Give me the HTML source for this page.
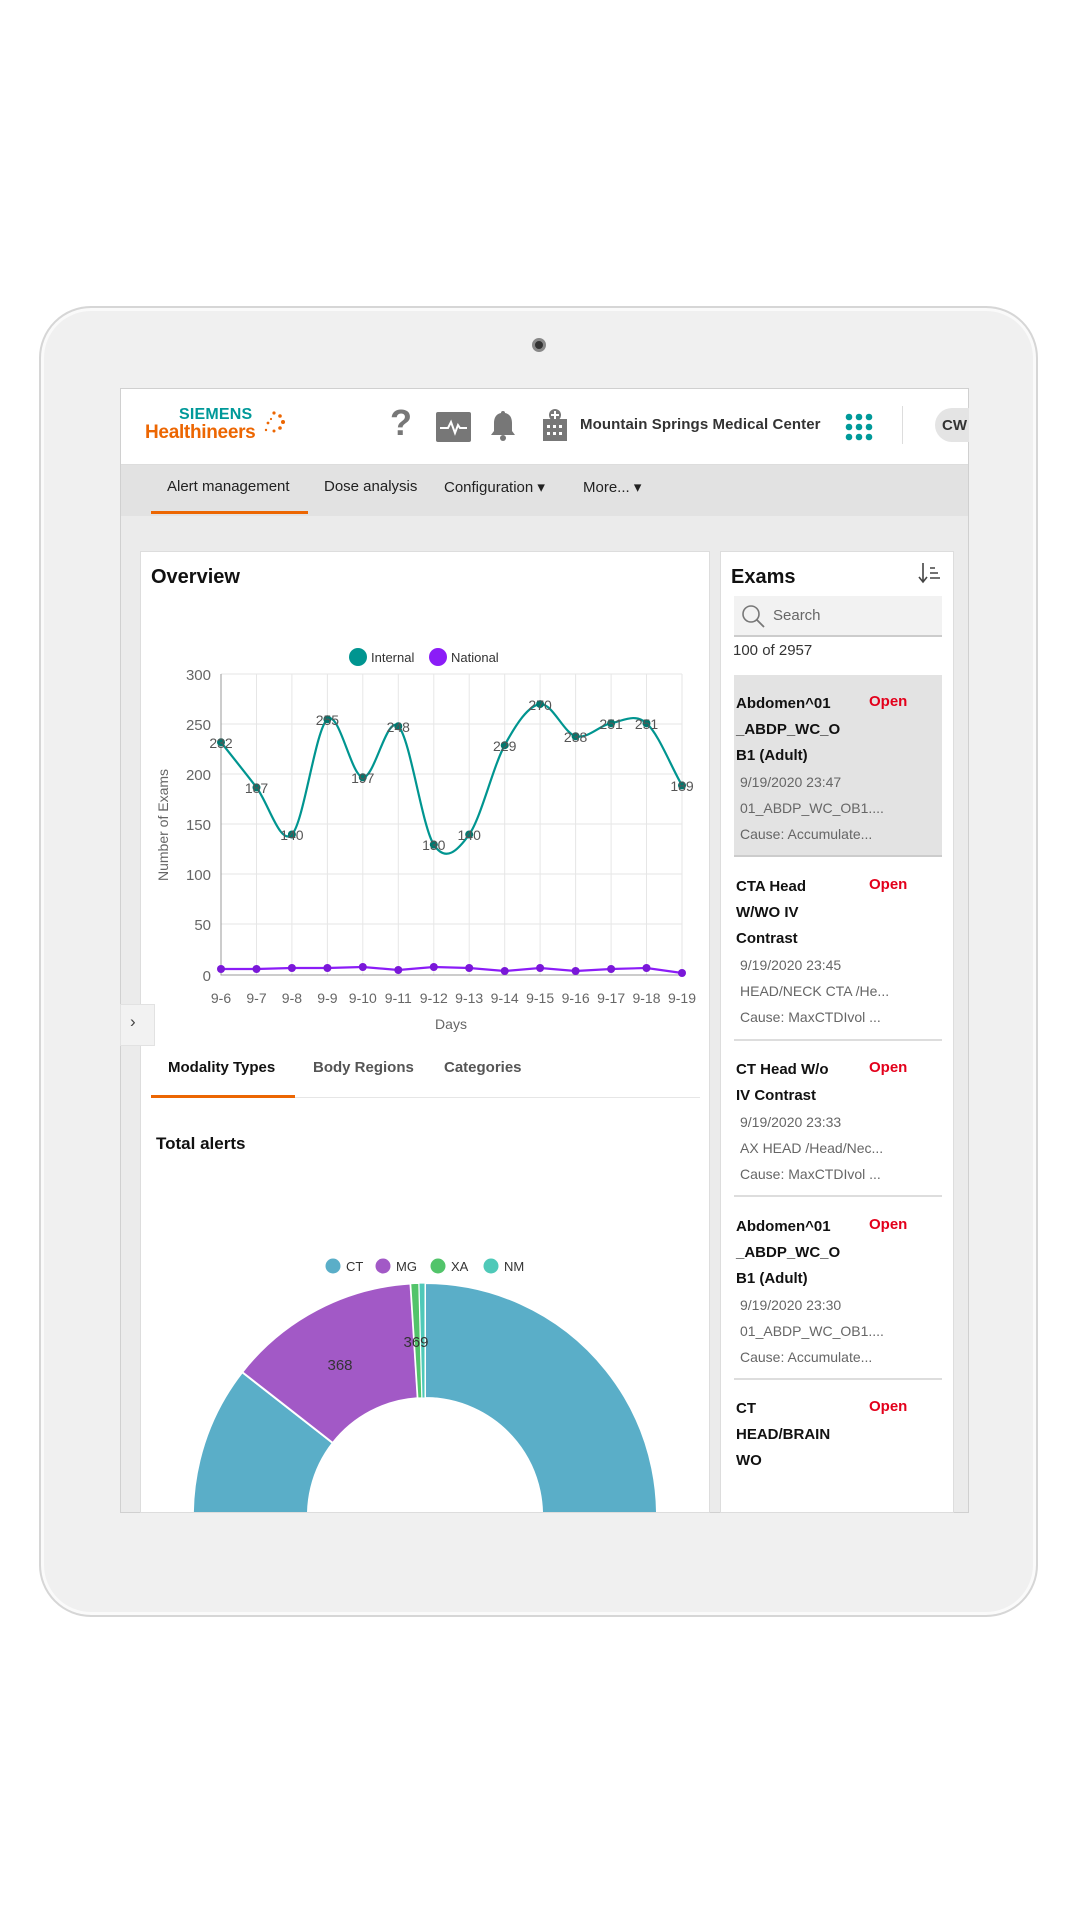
<!DOCTYPE html>
<html><head><meta charset="utf-8"><style>
*{margin:0;padding:0;box-sizing:border-box}
body{width:1080px;height:1920px;background:#fff;position:relative;overflow:hidden;font-family:"Liberation Sans",sans-serif}
.a{position:absolute}
.tab{left:39px;top:306px;width:999px;height:1311px;border-radius:52px;background:#f0f0f0;border:2px solid #d6d6d6;box-shadow:inset 0 0 0 3px #fafafa}
.scr{left:120px;top:388px;width:849px;height:1125px;background:#ebebeb;overflow:hidden;border:1px solid #d0d0d0}
.t{white-space:nowrap}
.ex{font-size:15px;font-weight:bold;color:#111}
.sub{font-size:14px;color:#666}
.op{font-size:15px;font-weight:bold;color:#e3001b}
</style></head><body>
<div class="a tab"></div>
<div class="a" style="left:532px;top:338px;width:14px;height:14px;border-radius:50%;background:#333;border:3px solid #888"></div>
<div class="a scr">
 <div class="a" style="left:0;top:0;width:849px;height:76px;background:#fff;border-bottom:1px solid #ddd"></div>
 <div class="a" style="left:0;top:76px;width:849px;height:51px;background:#e2e2e2"></div>
</div>
<!-- header -->
<div class="a t" style="left:179px;top:406px;font-size:16px;font-weight:bold;color:#009999;letter-spacing:0.2px">SIEMENS</div>
<div class="a t" style="left:145px;top:422px;font-size:19px;font-weight:bold;color:#ec6602;letter-spacing:-0.3px">Healthineers</div>
<svg class="a" style="left:262px;top:410px" width="24" height="30"><g fill="#ec6602"><circle cx="12" cy="3" r="1.6"/><circle cx="18" cy="6" r="1.8"/><circle cx="21" cy="12" r="2"/><circle cx="18" cy="18" r="1.8"/><circle cx="12" cy="21" r="1.5"/><circle cx="6" cy="13" r="1.4"/><circle cx="4" cy="20" r="1.2"/><circle cx="9" cy="9" r="1.1"/></g></svg>
<div class="a t" style="left:390px;top:402px;font-size:36px;font-weight:bold;color:#777">?</div>
<svg class="a" style="left:436px;top:412px" width="35" height="30"><rect width="35" height="30" rx="2" fill="#777"/><path d="M4 16h8l3-6 4 11 3-8 2 3h7" stroke="#fff" stroke-width="2" fill="none"/></svg>
<svg class="a" style="left:490px;top:409px" width="26" height="32"><path d="M13 2a2 2 0 0 1 2 2c5 1 7 5 7 10v8l3 4H1l3-4v-8c0-5 2-9 7-10a2 2 0 0 1 2-2z" fill="#777"/><circle cx="13" cy="29" r="3" fill="#777"/></svg>
<svg class="a" style="left:541px;top:407px" width="28" height="34"><rect x="2" y="12" width="24" height="22" fill="#777"/><circle cx="14" cy="8" r="6" fill="#777"/><path d="M14 4v8M10 8h8" stroke="#fff" stroke-width="2"/><g fill="#fff"><rect x="6" y="18" width="3" height="3"/><rect x="12" y="18" width="3" height="3"/><rect x="18" y="18" width="3" height="3"/><rect x="6" y="25" width="3" height="3"/><rect x="12" y="25" width="3" height="3"/><rect x="18" y="25" width="3" height="3"/></g></svg>
<div class="a t" style="left:580px;top:416px;font-size:15px;font-weight:bold;color:#333;letter-spacing:0.1px">Mountain Springs Medical Center</div>
<svg class="a" style="left:845px;top:413px" width="28" height="28"><g fill="#009999"><circle cx="4" cy="4" r="3.3"/><circle cx="14" cy="4" r="3.3"/><circle cx="24" cy="4" r="3.3"/><circle cx="4" cy="14" r="3.3"/><circle cx="14" cy="14" r="3.3"/><circle cx="24" cy="14" r="3.3"/><circle cx="4" cy="24" r="3.3"/><circle cx="14" cy="24" r="3.3"/><circle cx="24" cy="24" r="3.3"/></g></svg>
<div class="a" style="left:902px;top:406px;width:1px;height:38px;background:#ddd"></div>
<div class="a" style="left:935px;top:408px;width:34px;height:34px;border-radius:17px 0 0 17px;background:#e4e4e4"></div>
<div class="a t" style="left:942px;top:417px;font-size:15px;font-weight:bold;color:#333">CW</div>
<!-- nav -->
<div class="a t" style="left:167px;top:478px;font-size:15px;color:#222">Alert management</div>
<div class="a" style="left:151px;top:511px;width:157px;height:3px;background:#ec6602"></div>
<div class="a t" style="left:324px;top:478px;font-size:15px;color:#222">Dose analysis</div>
<div class="a t" style="left:444px;top:478px;font-size:15px;color:#222">Configuration ▾</div>
<div class="a t" style="left:583px;top:478px;font-size:15px;color:#222">More... ▾</div>
<!-- cards -->
<div class="a" style="left:140px;top:551px;width:570px;height:962px;background:#fff;border:1px solid #ddd;overflow:hidden"></div>
<div class="a" style="left:720px;top:551px;width:234px;height:962px;background:#fff;border:1px solid #ddd"></div>
<div class="a" style="left:120px;top:1004px;width:35px;height:42px;background:#f2f2f2;border:1px solid #e2e2e2"></div>
<div class="a t" style="left:130px;top:1012px;font-size:17px;color:#444">›</div>
<div class="a t" style="left:151px;top:566px;font-size:20px;font-weight:bold;color:#111">Overview</div>
<svg class="a" style="left:0;top:0" width="1080" height="1920">
<defs><clipPath id="c"><rect x="141" y="552" width="568" height="960"/></clipPath></defs>
<g font-family="Liberation Sans" font-size="13" fill="#333">
<circle cx="358" cy="657" r="9" fill="#009590"/><text x="371" y="662">Internal</text>
<circle cx="438" cy="657" r="9" fill="#8b1cf7"/><text x="451" y="662">National</text>
</g>
<g stroke="#e6e6e6" stroke-width="1">
<path d="M221 674H682M221 724H682M221 774H682M221 824H682M221 874H682M221 924H682"/>
<path d="M256.5 674V975M291.9 674V975M327.4 674V975M362.8 674V975M398.3 674V975M433.8 674V975M469.2 674V975M504.7 674V975M540.1 674V975M575.6 674V975M611.1 674V975M646.5 674V975M682 674V975"/>
</g>
<path d="M221 674V975H682" stroke="#999" fill="none"/>
<g font-family="Liberation Sans" font-size="15" fill="#666" text-anchor="end">
<text x="211" y="680">300</text><text x="211" y="730">250</text><text x="211" y="780">200</text><text x="211" y="830">150</text><text x="211" y="880">100</text><text x="211" y="930">50</text><text x="211" y="981">0</text>
</g>
<g font-family="Liberation Sans" font-size="14" fill="#666" text-anchor="middle">
<text x="221" y="1003">9-6</text><text x="256.5" y="1003">9-7</text><text x="291.9" y="1003">9-8</text><text x="327.4" y="1003">9-9</text><text x="362.8" y="1003">9-10</text><text x="398.3" y="1003">9-11</text><text x="433.8" y="1003">9-12</text><text x="469.2" y="1003">9-13</text><text x="504.7" y="1003">9-14</text><text x="540.1" y="1003">9-15</text><text x="575.6" y="1003">9-16</text><text x="611.1" y="1003">9-17</text><text x="646.5" y="1003">9-18</text><text x="682" y="1003">9-19</text>
<text x="451" y="1029">Days</text>
<text transform="translate(168 825) rotate(-90)">Number of Exams</text>
</g>
<path d="M221,742.2 C232.8,757.3 244.7,772.0 256.5,787.4 C268.3,802.8 280.1,845.9 291.9,834.5 C303.7,823.1 315.6,728.7 327.4,719.2 C339.2,709.7 351.0,776.1 362.8,777.3 C374.6,778.5 386.5,715.0 398.3,726.2 C410.1,737.4 422.0,826.5 433.8,844.6 C445.6,862.7 457.4,851.1 469.2,834.5 C481.0,817.9 492.9,766.9 504.7,745.2 C516.5,723.5 528.3,705.6 540.1,704.1 C551.9,702.6 563.8,733.0 575.6,736.2 C587.4,739.4 599.3,725.4 611.1,723.2 C622.9,721.0 634.7,712.8 646.5,723.2 C658.3,733.6 670.2,764.7 682,785.4" stroke="#009590" stroke-width="2.2" fill="none"/>
<g fill="#00786f"><circle cx="221" cy="742.2" r="4"/><circle cx="256.5" cy="787.4" r="4"/><circle cx="291.9" cy="834.5" r="4"/><circle cx="327.4" cy="719.2" r="4"/><circle cx="362.8" cy="777.3" r="4"/><circle cx="398.3" cy="726.2" r="4"/><circle cx="433.8" cy="844.6" r="4"/><circle cx="469.2" cy="834.5" r="4"/><circle cx="504.7" cy="745.2" r="4"/><circle cx="540.1" cy="704.1" r="4"/><circle cx="575.6" cy="736.2" r="4"/><circle cx="611.1" cy="723.2" r="4"/><circle cx="646.5" cy="723.2" r="4"/><circle cx="682" cy="785.4" r="4"/></g>
<polyline points="221,969 256.5,969 291.9,968 327.4,968 362.8,967 398.3,970 433.8,967 469.2,968 504.7,971 540.1,968 575.6,971 611.1,969 646.5,968 682,973" stroke="#8b1cf7" stroke-width="2.2" fill="none"/>
<g fill="#7a18d8"><circle cx="221" cy="969" r="4"/><circle cx="256.5" cy="969" r="4"/><circle cx="291.9" cy="968" r="4"/><circle cx="327.4" cy="968" r="4"/><circle cx="362.8" cy="967" r="4"/><circle cx="398.3" cy="970" r="4"/><circle cx="433.8" cy="967" r="4"/><circle cx="469.2" cy="968" r="4"/><circle cx="504.7" cy="971" r="4"/><circle cx="540.1" cy="968" r="4"/><circle cx="575.6" cy="971" r="4"/><circle cx="611.1" cy="969" r="4"/><circle cx="646.5" cy="968" r="4"/><circle cx="682" cy="973" r="4"/></g>
<g font-family="Liberation Sans" font-size="14" fill="#555" text-anchor="middle">
<text x="221" y="748">232</text><text x="256.5" y="793">187</text><text x="291.9" y="840">140</text><text x="327.4" y="725">255</text><text x="362.8" y="783">197</text><text x="398.3" y="732">248</text><text x="433.8" y="850">130</text><text x="469.2" y="840">140</text><text x="504.7" y="751">229</text><text x="540.1" y="710">270</text><text x="575.6" y="742">238</text><text x="611.1" y="729">251</text><text x="646.5" y="729">251</text><text x="682" y="791">189</text>
</g>
<g clip-path="url(#c)">
<path d="M425,1283 A232,232 0 1 1 242.2,1372.1 L332.8,1443 A117,117 0 1 0 425,1398 Z" fill="#5aaec8" stroke="#fff" stroke-width="2"/>
<path d="M242.2,1372.1 A232,232 0 0 1 410.5,1283.5 L417.7,1398.2 A117,117 0 0 0 332.8,1443 Z" fill="#a259c6" stroke="#fff" stroke-width="2"/>
<path d="M410.5,1283.5 A232,232 0 0 1 419,1283.1 L422,1398 A117,117 0 0 0 417.7,1398.2 Z" fill="#52c46a" stroke="#fff" stroke-width="1.5"/>
<path d="M419,1283.1 A232,232 0 0 1 425,1283 L425,1398 A117,117 0 0 0 422,1398 Z" fill="#4fc9b8" stroke="#fff" stroke-width="1"/>
</g>
<g font-family="Liberation Sans" font-size="15" fill="#333" text-anchor="middle"><text x="340" y="1370">368</text><text x="416" y="1347">369</text></g>
<g font-family="Liberation Sans" font-size="13" fill="#333">
<circle cx="333" cy="1266" r="7.5" fill="#5aaec8"/><text x="346" y="1271">CT</text>
<circle cx="383" cy="1266" r="7.5" fill="#a259c6"/><text x="396" y="1271">MG</text>
<circle cx="438" cy="1266" r="7.5" fill="#52c46a"/><text x="451" y="1271">XA</text>
<circle cx="491" cy="1266" r="7.5" fill="#4fc9b8"/><text x="504" y="1271">NM</text>
</g>
</svg>
<!-- tabs -->
<div class="a t" style="left:168px;top:1059px;font-size:15px;font-weight:bold;color:#111">Modality Types</div>
<div class="a t" style="left:313px;top:1059px;font-size:15px;font-weight:bold;color:#555">Body Regions</div>
<div class="a t" style="left:444px;top:1059px;font-size:15px;font-weight:bold;color:#555">Categories</div>
<div class="a" style="left:151px;top:1097px;width:549px;height:1px;background:#e6e6e6"></div>
<div class="a" style="left:151px;top:1095px;width:144px;height:3px;background:#ec6602"></div>
<div class="a t" style="left:156px;top:1134px;font-size:17px;font-weight:bold;color:#111">Total alerts</div>
<!-- exams -->
<div class="a t" style="left:731px;top:566px;font-size:20px;font-weight:bold;color:#111">Exams</div>
<svg class="a" style="left:918px;top:562px" width="24" height="22"><path d="M5 1v18M1 15l4 5 4-5" stroke="#444" stroke-width="1.6" fill="none"/><path d="M12 6h5M12 11h8M12 16h10" stroke="#444" stroke-width="1.4"/></svg>
<div class="a" style="left:734px;top:596px;width:208px;height:41px;background:#f2f2f2;border-bottom:2px solid #ccc"></div>
<svg class="a" style="left:741px;top:604px" width="26" height="26"><circle cx="10" cy="10" r="8" stroke="#777" stroke-width="1.6" fill="none"/><path d="M16 16l7 7" stroke="#777" stroke-width="1.8"/></svg>
<div class="a t" style="left:773px;top:607px;font-size:15px;color:#666">Search</div>
<div class="a t" style="left:733px;top:642px;font-size:15px;color:#333">100 of 2957</div>
<div class="a" style="left:734px;top:675px;width:208px;height:182px;background:#e3e3e3;border-bottom:2px solid #ccc"></div>
<div class="a" style="left:736px;top:691px;line-height:26px">
<div class="ex">Abdomen^01<br>_ABDP_WC_O<br>B1 (Adult)</div>
<div class="sub" style="padding-left:4px">9/19/2020 23:47<br>01_ABDP_WC_OB1....<br>Cause: Accumulate...</div></div>
<div class="a op" style="left:869px;top:693px">Open</div>
<div class="a" style="left:736px;top:874px;line-height:26px">
<div class="ex">CTA Head<br>W/WO IV<br>Contrast</div>
<div class="sub" style="padding-left:4px">9/19/2020 23:45<br>HEAD/NECK CTA /He...<br>Cause: MaxCTDIvol ...</div></div>
<div class="a op" style="left:869px;top:876px">Open</div>
<div class="a" style="left:734px;top:1039px;width:208px;height:2px;background:#ddd"></div>
<div class="a" style="left:736px;top:1057px;line-height:26px">
<div class="ex">CT Head W/o<br>IV Contrast</div>
<div class="sub" style="padding-left:4px">9/19/2020 23:33<br>AX HEAD /Head/Nec...<br>Cause: MaxCTDIvol ...</div></div>
<div class="a op" style="left:869px;top:1059px">Open</div>
<div class="a" style="left:734px;top:1195px;width:208px;height:2px;background:#ddd"></div>
<div class="a" style="left:736px;top:1214px;line-height:26px">
<div class="ex">Abdomen^01<br>_ABDP_WC_O<br>B1 (Adult)</div>
<div class="sub" style="padding-left:4px">9/19/2020 23:30<br>01_ABDP_WC_OB1....<br>Cause: Accumulate...</div></div>
<div class="a op" style="left:869px;top:1216px">Open</div>
<div class="a" style="left:734px;top:1378px;width:208px;height:2px;background:#ddd"></div>
<div class="a" style="left:736px;top:1396px;line-height:26px">
<div class="ex">CT<br>HEAD/BRAIN<br>WO</div></div>
<div class="a op" style="left:869px;top:1398px">Open</div>
</body></html>
